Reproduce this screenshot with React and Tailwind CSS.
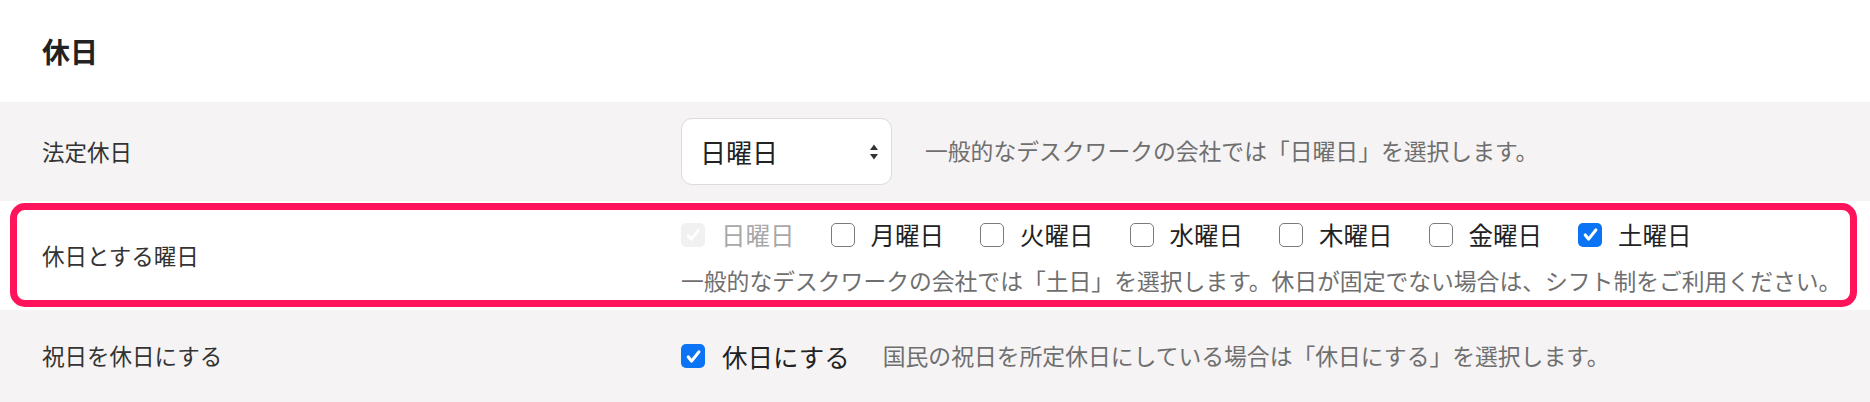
import React from 'react';

const days = [
  { name: '日曜日', checked: true, disabled: true },
  { name: '月曜日' },
  { name: '火曜日' },
  { name: '水曜日' },
  { name: '木曜日' },
  { name: '金曜日' },
  { name: '土曜日', checked: true },
];

function Check({ checked, disabled }) {
  if (disabled) {
    return (
      <span className="flex h-[24px] w-[24px] shrink-0 items-center justify-center rounded-[5px] bg-[#f1f1f1]">
        <svg viewBox="0 0 24 24" className="h-[20px] w-[20px]">
          <path d="M6 12.5l3.8 4.8 8.4-10.6" fill="none" stroke="#ffffff" strokeWidth="3.4" strokeLinecap="round" strokeLinejoin="round" />
        </svg>
      </span>
    );
  }
  if (checked) {
    return (
      <span className="flex h-[24px] w-[24px] shrink-0 items-center justify-center rounded-[5px] bg-[#0a74f5]">
        <svg viewBox="0 0 24 24" className="h-[21px] w-[21px]">
          <path d="M6 12.5l3.8 4.8 8.4-10.6" fill="none" stroke="#ffffff" strokeWidth="3.6" strokeLinecap="round" strokeLinejoin="round" />
        </svg>
      </span>
    );
  }
  return <span className="h-[24px] w-[24px] shrink-0 rounded-[5px] border-[1.5px] border-[#7b7b7b] bg-white" />;
}

export default function App() {
  return (
    <div className="w-[1870px] h-[402px] overflow-hidden bg-white text-[#333] font-['Noto_Sans_CJK_JP','Noto_Sans',sans-serif]">
      {/* heading */}
      <div className="flex h-[102px] items-center pl-[42px]">
        <h2 className="text-[28px] font-bold leading-none text-[#222]">休日</h2>
      </div>

      {/* 法定休日 */}
      <div className="grid h-[99px] grid-cols-[639px_1fr] items-center bg-[#f5f3f4] pl-[42px]">
        <div className="text-[22.5px] text-[#333]">法定休日</div>
        <div className="flex items-center gap-[33px]">
          <div className="flex h-[67px] w-[211px] items-center justify-between rounded-[11px] border-[1.5px] border-[#dcdcdc] bg-white pl-[18px] pr-[12px]">
            <span className="text-[26px] text-[#222]">日曜日</span>
            <svg viewBox="0 0 10 18" className="h-[18px] w-[10px]">
              <path d="M5 1.5L9 7H1z" fill="#333" />
              <path d="M5 16.5L9 11H1z" fill="#333" />
            </svg>
          </div>
          <span className="text-[22.8px] text-[#6f6f6f]">一般的なデスクワークの会社では「日曜日」を選択します。</span>
        </div>
      </div>

      {/* 休日とする曜日 */}
      <div className="relative grid h-[109px] grid-cols-[639px_1fr] items-center bg-white pl-[42px]">
        <div className="text-[22.5px] text-[#333]">休日とする曜日</div>
        <div className="flex flex-col gap-[11px] pt-[3px]">
          <div className="flex items-center">
            {days.map((d) => (
              <label key={d.name} className="mr-[36px] flex items-center gap-[16px]">
                <Check checked={d.checked} disabled={d.disabled} />
                <span className={`text-[24.5px] leading-[36px] ${d.disabled ? 'text-[#a8a8a8]' : 'text-[#222]'}`}>{d.name}</span>
              </label>
            ))}
          </div>
          <div className="text-[22.8px] leading-[34px] text-[#6f6f6f]">
            一般的なデスクワークの会社では「土日」を選択します。休日が固定でない場合は、シフト制をご利用ください。
          </div>
        </div>
        {/* highlight annotation */}
        <div className="pointer-events-none absolute top-[2px] bottom-[3px] left-[10px] right-[13px] rounded-[15px] border-[7px] border-[#ff135b]" />
      </div>

      {/* 祝日を休日にする */}
      <div className="grid h-[92px] grid-cols-[639px_1fr] items-center bg-[#f5f3f4] pl-[42px]">
        <div className="text-[22.5px] text-[#333]">祝日を休日にする</div>
        <div className="flex items-center">
          <label className="flex items-center gap-[17px]">
            <Check checked />
            <span className="text-[25.5px] text-[#222]">休日にする</span>
          </label>
          <span className="ml-[33px] text-[22.8px] text-[#6f6f6f]">国民の祝日を所定休日にしている場合は「休日にする」を選択します。</span>
        </div>
      </div>
    </div>
  );
}
